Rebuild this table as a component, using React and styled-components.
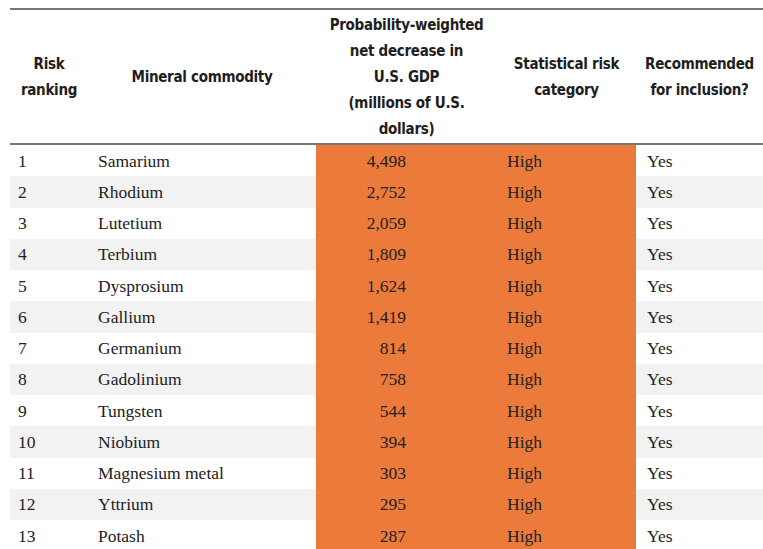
import React from "react";
import styled, { createGlobalStyle } from "styled-components";

const GlobalStyle = createGlobalStyle`
  html, body {
    margin: 0;
    padding: 0;
    background: #ffffff;
  }
`;

const Page = styled.div`
  padding: 8px 0 0 10px;
  overflow: hidden;
  height: 549px;
  box-sizing: border-box;
`;

const Table = styled.table`
  border-collapse: collapse;
  table-layout: fixed;
  width: 753px;
  font-family: "Liberation Serif", "Times New Roman", serif;
  color: #222222;
`;

const HeadRow = styled.tr`
  border-top: 2px solid #767676;
  border-bottom: 2px solid #767676;
`;

const Th = styled.th`
  height: 133px;
  padding: 0 4px;
  font-family: "Liberation Sans Narrow", "DejaVu Sans Condensed", "Liberation Sans", sans-serif;
  font-weight: 700;
  font-size: 15px;
  letter-spacing: -0.3px;
  line-height: 26px;
  color: #1e1e1e;
  text-align: center;
  vertical-align: middle;
`;

const Row = styled.tr`
  background: ${(p) => (p.$shade ? "#f2f2f2" : "#ffffff")};
`;

const Td = styled.td`
  height: 31.25px;
  padding: 0 ${(p) => p.$right || 0}px 0 ${(p) => p.$left || 0}px;
  font-size: 17.5px;
  line-height: 20px;
  text-align: ${(p) => p.$align || "left"};
  vertical-align: middle;
  white-space: nowrap;
  background: ${(p) => (p.$hot ? "#ec7a3b" : "transparent")};
`;

const rows = [
  ["Samarium", "4,498"],
  ["Rhodium", "2,752"],
  ["Lutetium", "2,059"],
  ["Terbium", "1,809"],
  ["Dysprosium", "1,624"],
  ["Gallium", "1,419"],
  ["Germanium", "814"],
  ["Gadolinium", "758"],
  ["Tungsten", "544"],
  ["Niobium", "394"],
  ["Magnesium metal", "303"],
  ["Yttrium", "295"],
  ["Potash", "287"],
];

export default function App() {
  return (
    <Page>
      <GlobalStyle />
      <Table>
        <colgroup>
          <col style={{ width: 78 }} />
          <col style={{ width: 228 }} />
          <col style={{ width: 181 }} />
          <col style={{ width: 139 }} />
          <col style={{ width: 127 }} />
        </colgroup>
        <thead>
          <HeadRow>
            <Th>
              Risk
              <br />
              ranking
            </Th>
            <Th>Mineral commodity</Th>
            <Th>
              Probability-weighted
              <br />
              net decrease in
              <br />
              U.S. GDP
              <br />
              (millions of U.S.
              <br />
              dollars)
            </Th>
            <Th>
              Statistical risk
              <br />
              category
            </Th>
            <Th>
              Recommended
              <br />
              for inclusion?
            </Th>
          </HeadRow>
        </thead>
        <tbody>
          {rows.map(([name, value], i) => (
            <Row key={name} $shade={i % 2 === 1}>
              <Td $left={8}>{i + 1}</Td>
              <Td $left={10}>{name}</Td>
              <Td $hot $align="right" $right={91}>
                {value}
              </Td>
              <Td $hot $left={10}>
                High
              </Td>
              <Td $left={11}>Yes</Td>
            </Row>
          ))}
        </tbody>
      </Table>
    </Page>
  );
}
